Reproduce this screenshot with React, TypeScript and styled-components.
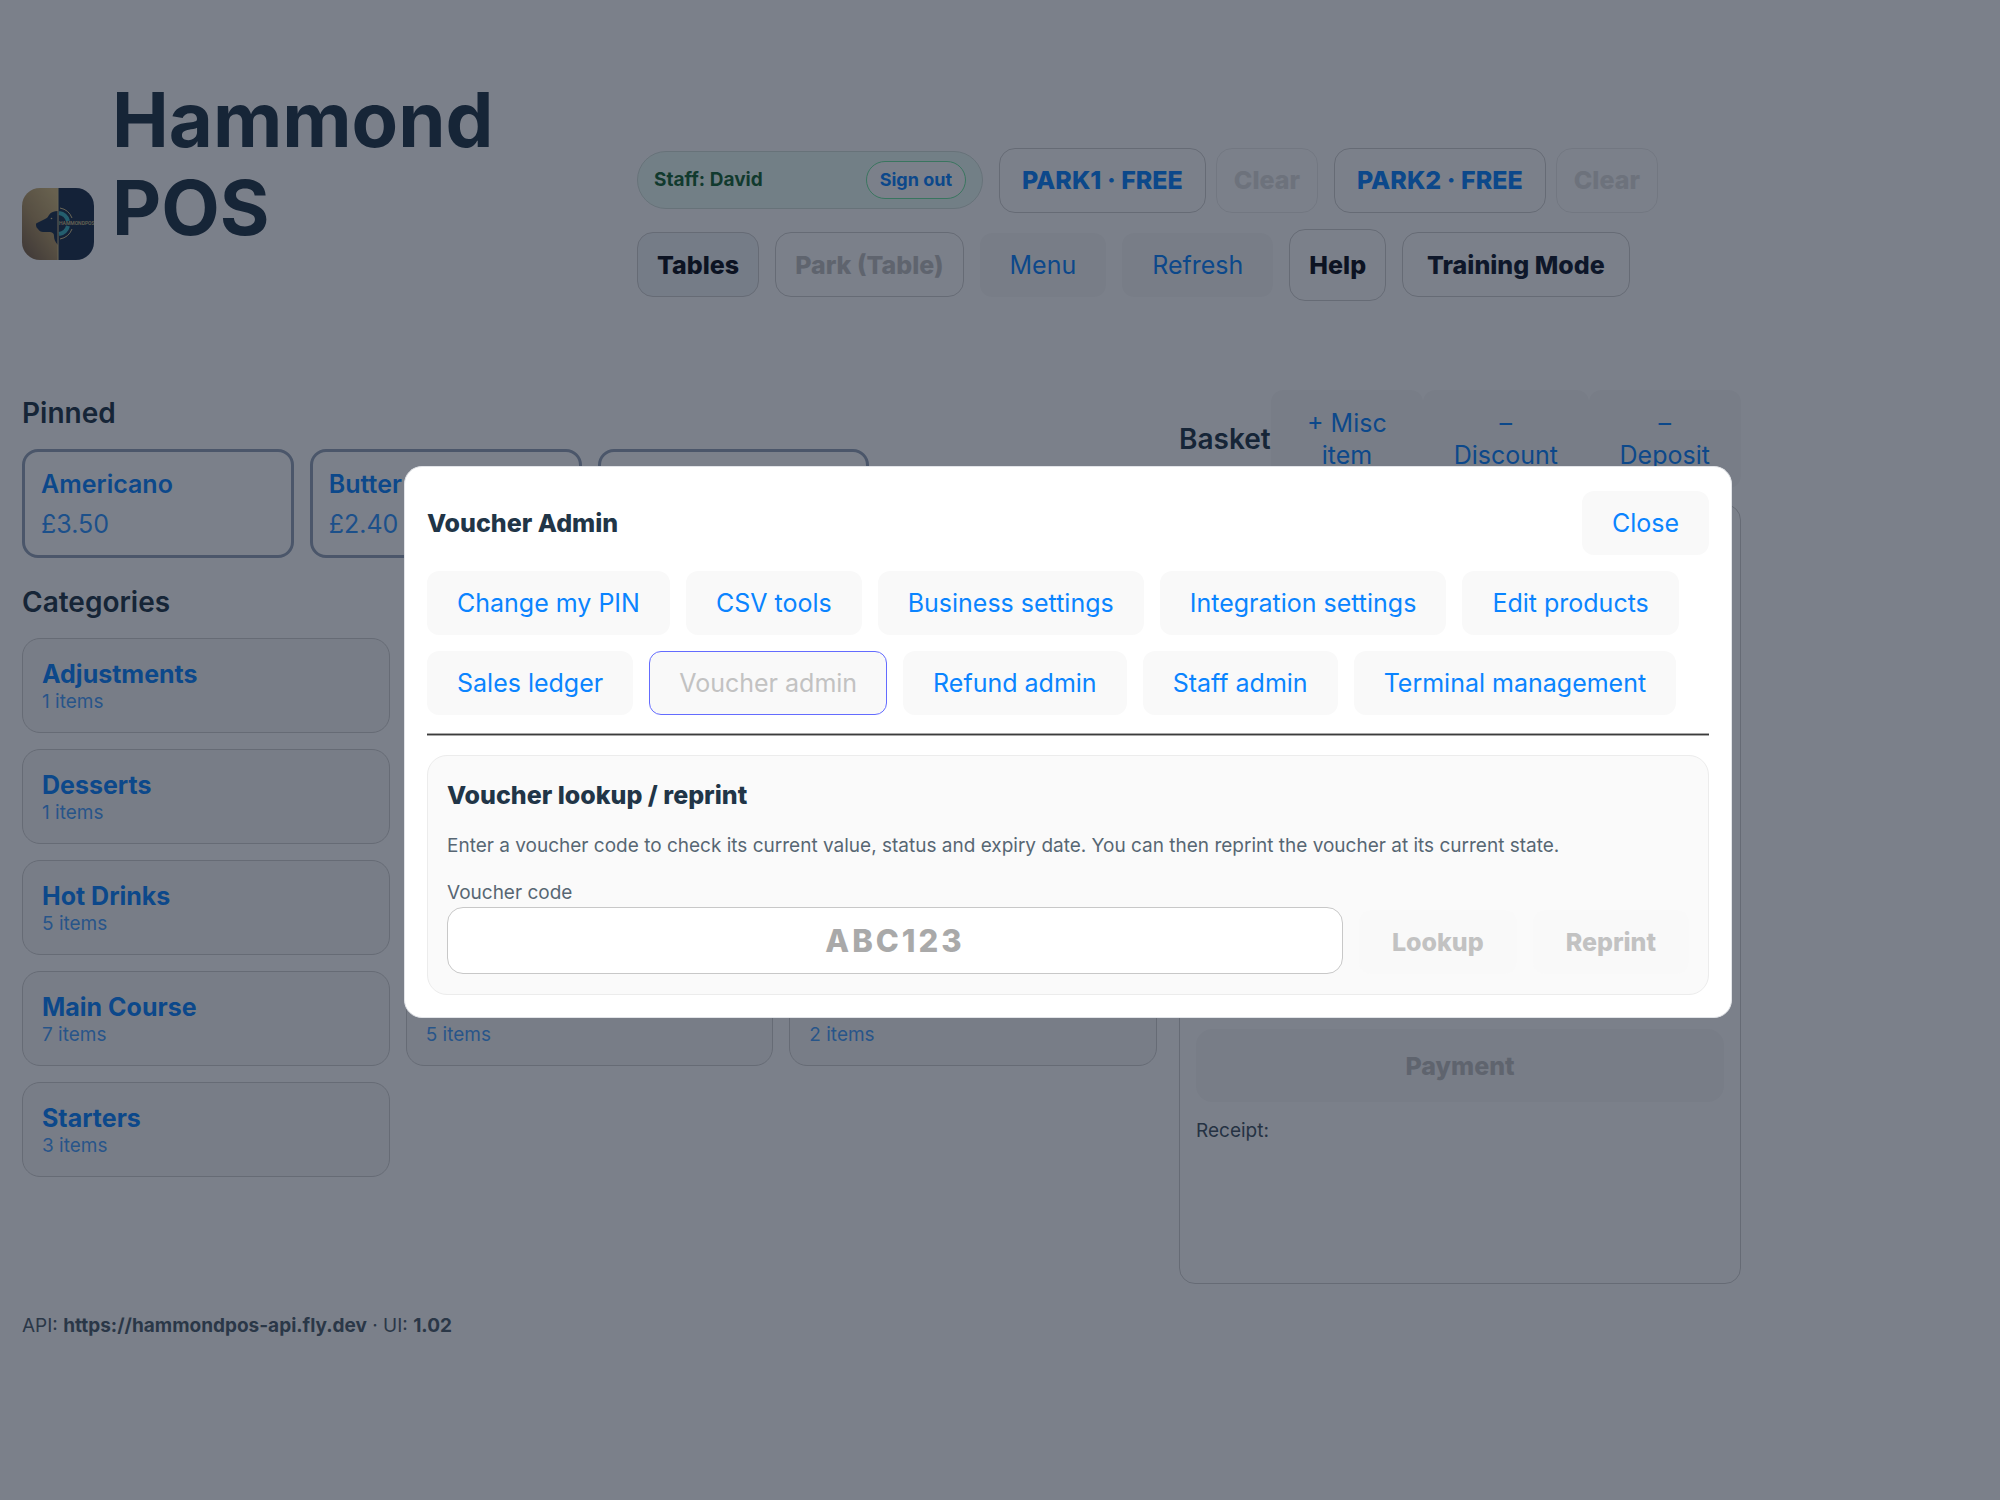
import React from "react";
import styled, { createGlobalStyle, css } from "styled-components";

const GlobalStyle = createGlobalStyle`
  *, *::before, *::after { box-sizing: border-box; }
  body {
    margin: 0;
    background: #ffffff;
    color: #213547;
    font-family: Inter, "Liberation Sans", sans-serif;
    font-size: 25px;
    line-height: 32px;
  }
  h1, h2, h3, p { margin: 0; }
  button, input { font: inherit; }
  button { cursor: pointer; }
  button:disabled { cursor: default; }
`;

/* ---------- shared buttons ---------- */

const Button = styled.button`
  min-height: 64px;
  padding: 15px 29px;
  border: 1px solid transparent;
  border-radius: 12px;
  background: #f9f9f9;
  color: #0a84ff;
  font-weight: 400;
  text-align: center;

  &:disabled {
    color: #c2c2c2;
  }
`;

const TabButton = styled(Button)<{ $active?: boolean }>`
  ${(p) => p.$active && css`border-color: #646cff;`}
`;

type Tone = "link" | "ink" | "navy";
const tones: Record<Tone, string> = { link: "#0a84ff", ink: "#0b0f19", navy: "#0f172a" };

const OutlineButton = styled.button<{
  $tone?: Tone;
  $pad?: number;
  $tinted?: boolean;
  $faint?: boolean;
  $tall?: boolean;
}>`
  min-height: ${(p) => (p.$tall ? 72 : 65)}px;
  padding: 0 ${(p) => p.$pad ?? 19}px;
  border: 1px solid ${(p) => (p.$faint ? "#ececec" : "#d0d0d0")};
  border-radius: 16px;
  background: ${(p) => (p.$tinted ? "#f1f5f9" : "#ffffff")};
  color: ${(p) => tones[p.$tone ?? "ink"]};
  font-weight: 800;
  white-space: nowrap;

  &:disabled {
    color: ${(p) => (p.$faint ? "#e0e0e0" : "#c2c2c2")};
  }
`;

/* ---------- page ---------- */

const Page = styled.div`
  max-width: 1763px;
  padding: 74px 22px 60px;
`;

const Header = styled.header`
  display: flex;
  align-items: center;
  min-height: 300px;
`;

const Brand = styled.div`
  flex: 0 0 615px;
  align-self: stretch;
  display: flex;
  align-items: center;
  gap: 18px;
`;

const Title = styled.h1`
  flex: 1;
  align-self: flex-start;
  padding-top: 1px;
  font-size: 76px;
  line-height: 88px;
  font-weight: 700;
`;

const Controls = styled.div`
  flex: 1;
  display: flex;
  flex-wrap: wrap;
  align-items: center;
  gap: 16px;
`;

const ParkSlot = styled.div`
  display: flex;
  gap: 10px;
`;

const StaffPill = styled.div`
  display: flex;
  align-items: center;
  justify-content: space-between;
  width: 346px;
  height: 58px;
  padding: 0 16px;
  border: 1px solid #d3e0da;
  border-radius: 29px;
  background: #ecfdf5;
  color: #166534;
  font-size: 19px;
  font-weight: 700;
`;

const SignOut = styled.button`
  height: 38px;
  padding: 0 13px;
  border: 1px solid #6ee7a0;
  border-radius: 19px;
  background: #ffffff;
  color: #0a84ff;
  font-size: 18px;
  font-weight: 700;
`;

const Columns = styled.main`
  display: grid;
  grid-template-columns: minmax(0, 1135fr) minmax(0, 562fr);
  gap: 22px;
`;

const Section = styled.section`
  padding-top: 22px;

  & + & { padding-top: 27px; }
`;

const SectionTitle = styled.h2`
  font-size: 28px;
  line-height: 34px;
  font-weight: 600;
`;

const CardGrid = styled.div<{ $columns: number }>`
  display: grid;
  grid-template-columns: repeat(${(p) => p.$columns}, minmax(0, 1fr));
  gap: 16px;
  margin-top: 19px;
`;

const PinnedCard = styled.button`
  display: flex;
  flex-direction: column;
  justify-content: center;
  gap: 8px;
  height: 109px;
  padding: 0 16px;
  border: 3px solid #94a3b8;
  border-radius: 16px;
  background: #ffffff;
  color: #0a84ff;
  text-align: left;
`;

const PinnedName = styled.span`
  font-weight: 600;
`;

const PinnedPrice = styled.span`
  opacity: 0.85;
`;

const CategoryCard = styled.button`
  display: flex;
  flex-direction: column;
  justify-content: center;
  height: 95px;
  padding: 2px 19px 0;
  border: 1px solid #d0d0d0;
  border-radius: 18px;
  background: #f9f9f9;
  color: #0a84ff;
  text-align: left;
`;

const CategoryName = styled.span`
  height: 31px;
  line-height: 31px;
  font-weight: 700;
`;

const CategoryCount = styled.span`
  font-size: 19px;
  line-height: 24px;
  opacity: 0.75;
`;

const BasketColumn = styled.section`
  display: flex;
  flex-direction: column;
  gap: 16px;
  padding-top: 16px;
`;

const BasketHeader = styled.div`
  display: flex;
  align-items: center;
`;

const BasketActions = styled.div`
  flex: 1;
  display: grid;
  grid-template-columns: 153fr 166fr 153fr;
  min-height: 98px;
`;

const BasketPanel = styled.div`
  display: flex;
  flex-direction: column;
  height: 780px;
  padding: 16px;
  border: 1px solid #d0d0d0;
  border-radius: 16px;
`;

const BasketItems = styled.div`
  flex: 1;
`;

const PayButton = styled(Button)`
  min-height: 73px;
  border-radius: 16px;
  font-weight: 800;
`;

const Receipt = styled.div`
  height: 165px;
  padding-top: 13px;
  font-size: 19px;
  opacity: 0.85;
`;

const Footer = styled.footer`
  padding-top: 26px;
  font-size: 19px;
  opacity: 0.8;
`;

/* ---------- dialog ---------- */

const Overlay = styled.div`
  position: fixed;
  inset: 0;
  display: flex;
  align-items: center;
  justify-content: center;
  padding: 0 0 16px 136px;
  background: rgba(15, 23, 42, 0.55);
`;

const Dialog = styled.div`
  width: 100%;
  max-width: 1328px;
  padding: 24px 22px 22px;
  border: 1px solid #e2e4e8;
  border-radius: 18px;
  background: #ffffff;
`;

const DialogHeader = styled.div`
  display: flex;
  align-items: center;
  justify-content: space-between;
`;

const DialogTitle = styled.h2`
  font-size: 25px;
  font-weight: 800;
`;

const Tabs = styled.nav`
  display: flex;
  flex-wrap: wrap;
  gap: 16px;
  padding-top: 16px;
`;

const Divider = styled.hr`
  height: 3px;
  margin: 18px 0 19px;
  border: 1px solid #a8a8a8;
  border-width: 1px 0;
  background: #3c3c3c;
`;

const VoucherPanel = styled.section`
  padding: 20px 19px;
  border: 1px solid #ececec;
  border-radius: 20px;
  background: #fafafa;
`;

const PanelTitle = styled.h3`
  font-size: 25px;
  line-height: 38px;
  font-weight: 800;
`;

const Hint = styled.p`
  padding-top: 17px;
  font-size: 19px;
  line-height: 30px;
  opacity: 0.75;
`;

const LookupForm = styled.form`
  display: flex;
  align-items: flex-end;
  gap: 16px;
  padding-top: 17px;
`;

const Field = styled.div`
  flex: 1;
  display: flex;
  flex-direction: column;
`;

const FieldLabel = styled.label`
  font-size: 19px;
  line-height: 29px;
  opacity: 0.75;
`;

const CodeInput = styled.input`
  width: 100%;
  height: 67px;
  padding: 0 16px;
  border: 1px solid #c8c8c8;
  border-radius: 16px;
  background: #ffffff;
  color: #213547;
  font-size: 31px;
  font-weight: 800;
  letter-spacing: 3px;
  text-align: center;
  text-transform: uppercase;

  &::placeholder { color: #a9a9a9; opacity: 1; }
`;

const FormButton = styled(Button)`
  padding: 15px 32px;
  font-weight: 800;
`;

/* ---------- logo ---------- */

const LogoSvg = styled.svg`
  flex: none;
  width: 72px;
  height: 72px;
`;

const Logo = () => (
  <LogoSvg viewBox="0 0 72 72" role="img" aria-label="Hammond POS logo">
    <defs>
      <clipPath id="tile">
        <rect width="72" height="72" rx="18" />
      </clipPath>
      <linearGradient id="gold" x1="0.1" y1="1" x2="0.8" y2="0">
        <stop offset="0" stopColor="#7a6048" />
        <stop offset="0.5" stopColor="#b09462" />
        <stop offset="1" stopColor="#d4ba7c" />
      </linearGradient>
    </defs>
    <g clipPath="url(#tile)">
      <rect width="36" height="72" fill="url(#gold)" />
      <rect x="36" width="36" height="72" fill="#1c2f4a" />
      <path
        d="M36 23c-4 0-7 1-9 4-1 2-2 3-4 4l-8 4c-1 0-1 1-1 2 0 2 1 3 2 4 1 2 3 3 5 3h6c3 0 5 1 5 4 0 3 1 6 4 9z"
        fill="#1c2f4a"
      />
      <circle cx="29.500" cy="30.500" r="0.800" fill="#d8c48a" />
      <path d="M37 25a11 11 0 0 1 9 8M46 38a11 11 0 0 1-9 8" fill="none" stroke="#3eb4c1" strokeWidth="4" />
      <path d="M38 20a16 16 0 0 1 12 10M50 41a16 16 0 0 1-12 10" fill="none" stroke="#d9c58c" strokeWidth="1" />
      <path d="M36 0v72" stroke="#d9c58c" strokeWidth="1" />
      <text x="37" y="37" fontFamily="Roboto, sans-serif" fontSize="5" fontWeight="500" fill="#d9c58c">
        HAMMONDPOS
      </text>
    </g>
  </LogoSvg>
);

/* ---------- data ---------- */

const pinned = [
  { name: "Americano", price: "£3.50" },
  { name: "Butter", price: "£2.40" },
  { name: "", price: "" },
];

const categories = [
  { name: "Adjustments", count: "1 items" }, {}, {},
  { name: "Desserts", count: "1 items" }, {}, {},
  { name: "Hot Drinks", count: "5 items" }, {}, {},
  { name: "Main Course", count: "7 items" }, { count: "5 items" }, { count: "2 items" },
  { name: "Starters", count: "3 items" },
] as { name?: string; count?: string }[];

const tabs = [
  "Change my PIN",
  "CSV tools",
  "Business settings",
  "Integration settings",
  "Edit products",
  "Sales ledger",
  "Voucher admin",
  "Refund admin",
  "Staff admin",
  "Terminal management",
];

const activeTab = "Voucher admin";

export default function App() {
  return (
    <>
      <GlobalStyle />
      <Page>
        <Header>
          <Brand>
            <Logo />
            <Title>
              Hammond
              <br />
              POS
            </Title>
          </Brand>
          <Controls>
            <StaffPill>
              <span>Staff: David</span>
              <SignOut type="button">Sign out</SignOut>
            </StaffPill>
            {["PARK1", "PARK2"].map((slot) => (
              <ParkSlot key={slot}>
                <OutlineButton type="button" $tone="link" $pad={22}>{slot} · FREE</OutlineButton>
                <OutlineButton type="button" $faint $pad={17} disabled>Clear</OutlineButton>
              </ParkSlot>
            ))}
            <OutlineButton type="button" $tinted>Tables</OutlineButton>
            <OutlineButton type="button" disabled>Park (Table)</OutlineButton>
            <Button type="button">Menu</Button>
            <Button type="button">Refresh</Button>
            <OutlineButton type="button" $tall>Help</OutlineButton>
            <OutlineButton type="button" $tone="navy" $pad={24}>Training Mode</OutlineButton>
          </Controls>
        </Header>

        <Columns>
          <div>
            <Section>
              <SectionTitle>Pinned</SectionTitle>
              <CardGrid $columns={4}>
                {pinned.map((item, i) => (
                  <PinnedCard type="button" key={i}>
                    <PinnedName>{item.name}</PinnedName>
                    <PinnedPrice>{item.price}</PinnedPrice>
                  </PinnedCard>
                ))}
              </CardGrid>
            </Section>
            <Section>
              <SectionTitle>Categories</SectionTitle>
              <CardGrid $columns={3}>
                {categories.map((item, i) => (
                  <CategoryCard type="button" key={i}>
                    <CategoryName>{item.name}</CategoryName>
                    <CategoryCount>{item.count}</CategoryCount>
                  </CategoryCard>
                ))}
              </CardGrid>
            </Section>
          </div>

          <BasketColumn>
            <BasketHeader>
              <SectionTitle>Basket</SectionTitle>
              <BasketActions>
                <Button type="button">+ Misc item</Button>
                <Button type="button">– Discount</Button>
                <Button type="button">– Deposit</Button>
              </BasketActions>
            </BasketHeader>
            <BasketPanel>
              <BasketItems />
              <PayButton type="button" disabled>Payment</PayButton>
              <Receipt>Receipt:</Receipt>
            </BasketPanel>
          </BasketColumn>
        </Columns>

        <Footer>
          API: <strong>https://hammondpos-api.fly.dev</strong> · UI: <strong>1.02</strong>
        </Footer>
      </Page>

      <Overlay>
        <Dialog role="dialog" aria-modal="true" aria-labelledby="dialog-title">
          <DialogHeader>
            <DialogTitle id="dialog-title">Voucher Admin</DialogTitle>
            <Button type="button">Close</Button>
          </DialogHeader>
          <Tabs>
            {tabs.map((tab) => (
              <TabButton type="button" key={tab} $active={tab === activeTab} disabled={tab === activeTab}>
                {tab}
              </TabButton>
            ))}
          </Tabs>
          <Divider />
          <VoucherPanel>
            <PanelTitle>Voucher lookup / reprint</PanelTitle>
            <Hint>
              Enter a voucher code to check its current value, status and expiry date. You can then
              reprint the voucher at its current state.
            </Hint>
            <LookupForm onSubmit={(e) => e.preventDefault()}>
              <Field>
                <FieldLabel htmlFor="voucher-code">Voucher code</FieldLabel>
                <CodeInput id="voucher-code" type="text" placeholder="ABC123" />
              </Field>
              <FormButton type="submit" disabled>Lookup</FormButton>
              <FormButton type="button" disabled>Reprint</FormButton>
            </LookupForm>
          </VoucherPanel>
        </Dialog>
      </Overlay>
    </>
  );
}
